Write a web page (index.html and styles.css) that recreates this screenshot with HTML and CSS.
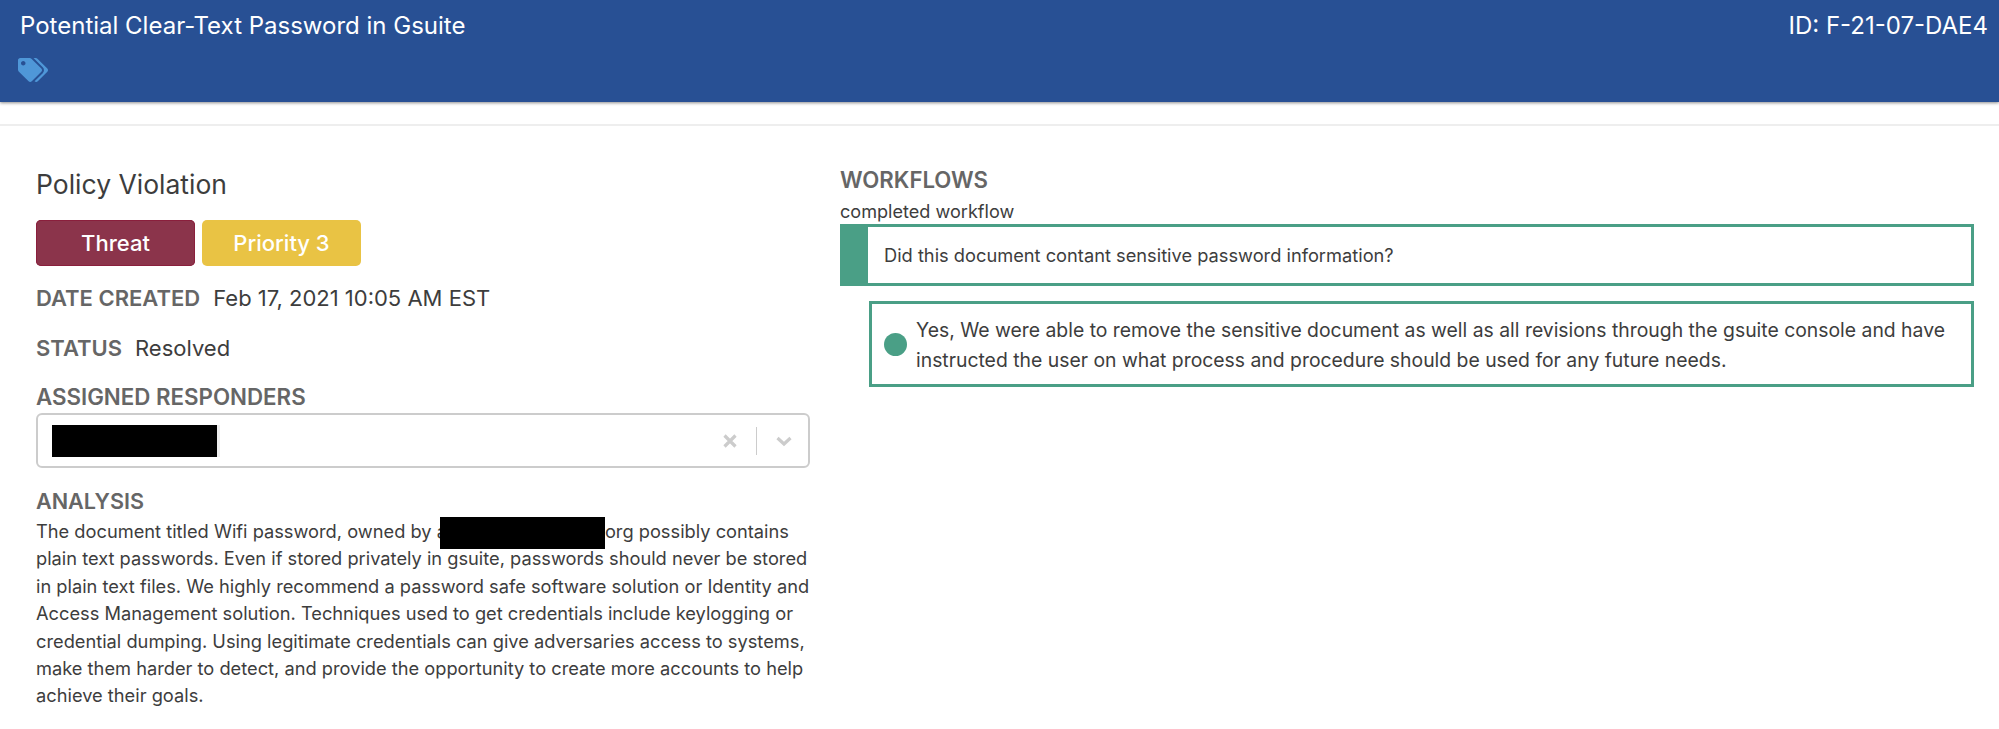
FILE: index.html
```html
<!DOCTYPE html>
<html lang="en">
<head>
<meta charset="utf-8">
<title>Potential Clear-Text Password in Gsuite</title>
<link rel="stylesheet" href="styles.css">
</head>
<body>
<header class="topbar">
  <div class="topbar-row">
    <div class="topbar-title">Potential Clear-Text Password in Gsuite</div>
    <div class="topbar-id">ID: F-21-07-DAE4</div>
  </div>
  <svg class="tags-icon" viewBox="0 0 640 512" aria-hidden="true"><path d="M497.941 225.941L286.059 14.059A48 48 0 0 0 252.118 0H48C21.49 0 0 21.49 0 48v204.118a48 48 0 0 0 14.059 33.941l211.882 211.882c18.744 18.745 49.136 18.746 67.882 0l204.118-204.118c18.745-18.745 18.745-49.137 0-67.882zM112 160c-26.51 0-48-21.49-48-48s21.49-48 48-48 48 21.49 48 48-21.49 48-48 48zm513.941 133.823L421.823 497.941c-18.745 18.745-49.137 18.745-67.882 0l-.36-.36L527.64 323.522c16.999-16.999 26.36-39.6 26.36-63.64s-9.362-46.641-26.36-63.64L331.397 0h48.721a48 48 0 0 1 33.941 14.059l211.882 211.882c18.745 18.745 18.745 49.137 0 67.882z"/></svg>
</header>
<div class="rule"></div>
<main class="content">
  <section class="left">
    <h1 class="kind">Policy Violation</h1>
    <div class="badges">
      <span class="badge badge-threat">Threat</span>
      <span class="badge badge-priority">Priority 3</span>
    </div>
    <div class="meta meta-date"><span class="label">DATE CREATED</span><span>Feb 17, 2021 10:05 AM EST</span></div>
    <div class="meta meta-status"><span class="label">STATUS</span><span>Resolved</span></div>
    <div class="label block-label">ASSIGNED RESPONDERS</div>
    <div class="select">
      <span class="redact redact-name"></span>
      <div class="select-controls">
        <svg class="select-x" viewBox="0 0 20 20" aria-hidden="true"><path d="M4.500 4.500l11 11M15.500 4.500l-11 11"/></svg>
        <span class="select-sep"></span>
        <svg class="select-chevron" viewBox="0 0 20 20" aria-hidden="true"><path d="M3.500 7l6.500 6 6.500-6"/></svg>
      </div>
    </div>
    <div class="label analysis-label">ANALYSIS</div>
    <div class="analysis">
      <div class="analysis-first"><span>The document titled Wifi password, owned by a</span><span class="redact redact-mail"></span><span>org possibly contains</span></div>
      <p class="analysis-rest">plain text passwords. Even if stored privately in gsuite, passwords should never be stored in plain text files. We highly recommend a password safe software solution or Identity and Access Management solution. Techniques used to get credentials include keylogging or credential dumping. Using legitimate credentials can give adversaries access to systems, make them harder to detect, and provide the opportunity to create more accounts to help achieve their goals.</p>
    </div>
  </section>
  <section class="right">
    <div class="label workflows-label">WORKFLOWS</div>
    <div class="workflow-state">completed workflow</div>
    <div class="question">Did this document contant sensitive password information?</div>
    <div class="answer">
      <span class="answer-dot"></span>
      <p class="answer-text">Yes, We were able to remove the sensitive document as well as all revisions through the gsuite console and have instructed the user on what process and procedure should be used for any future needs.</p>
    </div>
  </section>
</main>
</body>
</html>
```

FILE: styles.css
```css
* { box-sizing: border-box; }
html, body { margin: 0; padding: 0; }
body {
  width: 1999px;
  height: 729px;
  overflow: hidden;
  background: #fff;
  color: #3d3d3d;
  font-family: Inter, "Liberation Sans", sans-serif;
  font-size: 18px;
}
.topbar {
  height: 102px;
  background: #285094;
  color: #fff;
  padding: 13px 11px 0 20px;
  box-shadow: 0 1px 3px rgba(0, 0, 0, .45);
}
.topbar-row {
  display: flex;
  justify-content: space-between;
  font-size: 24px;
  line-height: 26px;
}
.tags-icon {
  display: block;
  width: 30px;
  height: 24px;
  margin: 19px 0 0 -2px;
  fill: #4f97d8;
}
.rule {
  height: 2px;
  margin-top: 22px;
  background: #eee;
}
.content {
  display: grid;
  grid-template-columns: 774px 1134px;
  column-gap: 30px;
  padding-left: 36px;
}
.left { padding-top: 41px; }
.kind {
  margin: 0;
  font-size: 26.5px;
  font-weight: 400;
  line-height: 34px;
}
.badges {
  display: flex;
  gap: 7px;
  margin-top: 19px;
}
.badge {
  width: 159px;
  height: 46px;
  border-radius: 5px;
  color: #fff;
  font-size: 22px;
  font-weight: 500;
  line-height: 46px;
  text-align: center;
}
.badge-threat { background: #8b344b; box-shadow: inset 0 0 0 1px #8a1f3c; }
.badge-priority { background: #e9c344; }
.label { color: #666; font-weight: 600; }
.meta {
  display: flex;
  gap: 13px;
  font-size: 22px;
  line-height: 26px;
}
.meta-date { margin-top: 19px; }
.meta-status { margin-top: 24px; }
.block-label {
  margin-top: 23px;
  font-size: 22.3px;
  line-height: 26px;
}
.select {
  display: flex;
  align-items: center;
  justify-content: space-between;
  height: 55px;
  margin-top: 3px;
  padding: 0 14px;
  border: 2px solid #ccc;
  border-radius: 6px;
}
.redact { display: inline-block; background: #000; }
.redact-name { width: 165px; height: 32px; box-shadow: 3px 0 0 #eee; }
.select-controls { display: flex; align-items: center; }
.select-x, .select-chevron { width: 20px; height: 20px; fill: none; stroke: #ccc; stroke-width: 3.2; }
.select-sep { width: 1px; height: 28px; margin: 0 17px 0 16px; background: #ccc; }
.analysis-label {
  margin-top: 20px;
  font-size: 21.6px;
  line-height: 26px;
}
.analysis {
  margin-top: 4px;
  font-size: 18.25px;
  line-height: 27.4px;
}
.analysis-first { height: 27.4px; white-space: nowrap; }
.analysis-rest { margin: 0; }
.redact-mail {
  width: 165px;
  height: 32px;
  margin: -6px 0 -6px -7px;
  vertical-align: middle;
  position: relative;
}
.right { padding-top: 40px; }
.workflows-label { margin-top: 1px; font-size: 22.2px; line-height: 26px; }
.workflow-state { font-size: 18.1px; line-height: 22px; margin-top: 7px; }
.question {
  display: flex;
  align-items: center;
  height: 62px;
  margin-top: 2px;
  padding-left: 16px;
  border: 3px solid #4a9f86;
  border-left-width: 28px;
  font-size: 18.25px;
}
.answer {
  display: flex;
  align-items: center;
  gap: 9px;
  height: 86px;
  margin: 15px 0 0 29px;
  padding-left: 12px;
  border: 3px solid #4a9f86;
}
.answer-dot {
  flex: none;
  width: 23px;
  height: 23px;
  border-radius: 50%;
  background: #4a9f86;
}
.answer-text {
  margin: 2px 0 0;
  font-size: 19.38px;
  line-height: 30.5px;
}
```
